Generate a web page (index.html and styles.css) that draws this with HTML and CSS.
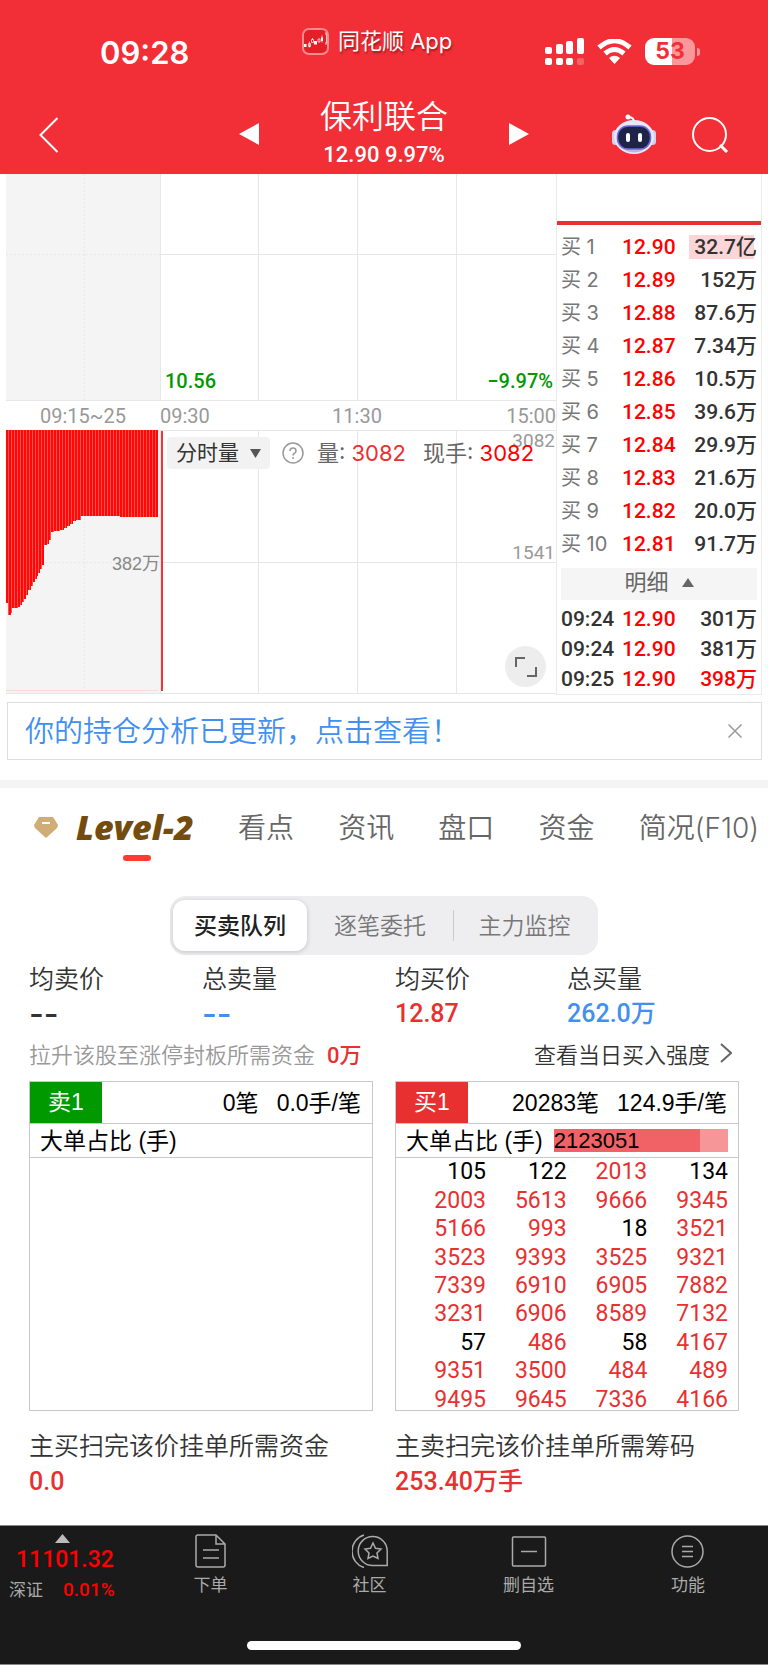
FILE: index.html
```
<!DOCTYPE html>
<html lang="zh-CN">
<head>
<meta charset="utf-8">
<meta name="viewport" content="width=device-width, initial-scale=1">
<title>保利联合</title>
<link rel="stylesheet" href="styles.css">
</head>
<body>
<header class="top">
  <div class="status">
    <span class="clock">09:28</span>
    <span class="app-label">
      <svg width="27" height="27" viewBox="0 0 27 27"><rect x="1" y="1" width="25" height="25" rx="6" fill="#e41f27" stroke="#f98a8e" stroke-width="2"/><path d="M2 16h2.500v3H2zM12 13h3v3.500h-3zM19 9.500h2v3.500h-2z" fill="#fff"/><path d="M6.500 15.500h2v3h-2zM9.500 11.500h2v3h-2zM16 11h2v3h-2zM23 6h1.500v9H23M7.500 13.500v6M10.500 10v2M20 7.500v7M24 4v2M24 15v2" fill="none" stroke="#fff" stroke-width=".7"/></svg>
      <span>同花顺 App</span>
    </span>
    <span class="indicators">
      <svg width="39" height="27" viewBox="0 0 39 27" fill="#fff"><rect y="9" width="7" height="7" rx="2"/><rect x="11" y="6" width="7" height="10" rx="2"/><rect x="21" y="3" width="7" height="13" rx="2"/><rect x="32" width="7" height="16" rx="2"/><rect y="20" width="7" height="7" rx="2"/><rect x="11" y="20" width="7" height="7" rx="2"/><rect x="21" y="20" width="7" height="7" rx="2"/><rect x="32" y="20" width="7" height="7" rx="2" opacity=".25"/></svg>
      <svg width="35" height="25" viewBox="0 0 35 25"><path d="M2 8.500Q17.500-5 33 8.500M8 14.500Q17.500 6.500 27 14.500" fill="none" stroke="#fff" stroke-width="5"/><path d="M12 19Q17.500 14.500 23 19L17.500 25z" fill="#fff"/></svg>
      <span class="battery"><span>53</span></span>
    </span>
  </div>
  <nav class="nav">
    <button class="icon-btn back" aria-label="返回"><svg width="20" height="36" viewBox="0 0 20 36"><path d="M18.500 1L1.500 18L18.500 35" fill="none" stroke="#fff" stroke-width="2"/></svg></button>
    <div class="switcher">
      <button class="icon-btn" aria-label="上一只"><svg width="20" height="22" viewBox="0 0 20 22"><path d="M20 0v22L0 11z" fill="#fff"/></svg></button>
      <div class="stock"><h1>保利联合</h1><p>12.90 9.97%</p></div>
      <button class="icon-btn" aria-label="下一只"><svg width="20" height="22" viewBox="0 0 20 22"><path d="M0 0v22L20 11z" fill="#fff"/></svg></button>
    </div>
    <div class="tools">
      <button class="icon-btn" aria-label="助手"><svg width="44" height="40" viewBox="0 0 44 40"><path d="M22 8Q22 3 16 3" fill="none" stroke="#fff" stroke-width="2"/><circle cx="16" cy="3" r="2.500" fill="#fff"/><rect x="0" y="16" width="7" height="15" rx="3.500" fill="#cfcff0"/><rect x="37" y="16" width="7" height="15" rx="3.500" fill="#cfcff0"/><ellipse cx="22" cy="23" rx="20" ry="17" fill="#e9e8f8"/><path d="M6 31Q22 46 38 31Q22 40 6 31" fill="#b9b6de"/><rect x="5.500" y="12" width="33" height="23" rx="10.500" fill="#1e2448" stroke="#7168d8" stroke-width="1.500"/><rect x="14" y="19" width="4" height="9" rx="2" fill="#fff"/><rect x="26" y="19" width="4" height="9" rx="2" fill="#fff"/></svg></button>
      <button class="icon-btn" aria-label="搜索"><svg width="37" height="36" viewBox="0 0 37 36"><circle cx="17.500" cy="17.500" r="16.500" fill="none" stroke="#fff" stroke-width="2"/><path d="M28 28l7 7" stroke="#fff" stroke-width="3"/></svg></button>
    </div>
  </nav>
</header>

<main>
<section class="market">
  <div class="charts">
    <div class="price">
      <svg class="plot" viewBox="0 0 550 227" preserveAspectRatio="none"><rect width="154" height="227" fill="#f4f4f4"/><path d="M78.500 0V227M0 80.500H154" stroke="#e9e9e9" stroke-dasharray="2 2"/><path d="M154.500 0V227M252.500 0V227M351.500 0V227M450.500 0V227M154 80.500H550M0 226.500H550" fill="none" stroke="#e7e7e7"/></svg>
      <span class="low">10.56</span><span class="low">−9.97%</span>
    </div>
    <div class="axis"><span>09:15~25</span><span>09:30</span><span>11:30</span><span>15:00</span></div>
    <div class="volume">
      <svg class="plot" viewBox="0 0 550 264" preserveAspectRatio="none"><defs><pattern id="bars" width="3" height="8" patternUnits="userSpaceOnUse"><rect width="3" height="8" fill="#ff5050"/><rect width="2" height="8" fill="#fe0808"/></pattern></defs><rect width="154" height="264" fill="#f4f4f4"/><path d="M78.500 0V264M0 132.500H154" stroke="#e9e9e9" stroke-dasharray="2 2"/><path d="M154 .5H550M154.500 0V264M252.500 0V264M351.500 0V264M450.500 0V264M154 132.500H550M0 263.500H550" fill="none" stroke="#e7e7e7"/><path d="M0 260.500H152" stroke="#fbd9d9"/><path d="M0 0V173H2V185H5V183H6V178H12V177H14V175H16V172H18V169H20V165H22V160H25V156H27V152H29V149H31V146H32V143H34V139H36V135H38V115H41V114H43V110H45V102H48V101H54V100H58V98H61V96H64V94H67V91H70V90H75V86H114V87H152V0Z" fill="url(#bars)"/><path d="M156 1V261" stroke="#f03535" stroke-width="2"/></svg>
      <span class="auction-mid">382万</span>
      <div class="legend">
        <button class="metric">分时量<svg width="11" height="9" viewBox="0 0 11 9"><path d="M0 0h11L5.500 9z" fill="#555"/></svg></button>
        <svg class="help" width="22" height="22" viewBox="0 0 22 22" fill="none" stroke="#999" stroke-width="1.500"><circle cx="11" cy="11" r="10"/><path d="M8 9Q8 6 11 6T14 9Q14 10.500 12.500 11.200T11 13.500M11 15v2"/></svg>
        <span>量: <b>3082</b></span><span>现手: <b class="hot">3082</b></span>
      </div>
      <span class="scale max">3082</span><span class="scale mid">1541</span>
      <button class="expand" aria-label="全屏"><svg width="22" height="22" viewBox="0 0 22 22" fill="none" stroke="#666" stroke-width="2"><path d="M1 11V2H10M21 11V20H12"/></svg></button>
    </div>
  </div>
  <aside class="book">
    <table class="quotes">
      <tr><th>买 1</th><td class="up">12.90</td><td><span class="heavy">32.7亿</span></td></tr>
      <tr><th>买 2</th><td class="up">12.89</td><td>152万</td></tr>
      <tr><th>买 3</th><td class="up">12.88</td><td>87.6万</td></tr>
      <tr><th>买 4</th><td class="up">12.87</td><td>7.34万</td></tr>
      <tr><th>买 5</th><td class="up">12.86</td><td>10.5万</td></tr>
      <tr><th>买 6</th><td class="up">12.85</td><td>39.6万</td></tr>
      <tr><th>买 7</th><td class="up">12.84</td><td>29.9万</td></tr>
      <tr><th>买 8</th><td class="up">12.83</td><td>21.6万</td></tr>
      <tr><th>买 9</th><td class="up">12.82</td><td>20.0万</td></tr>
      <tr><th>买 10</th><td class="up">12.81</td><td>91.7万</td></tr>
    </table>
    <button class="detail">明细<svg width="12" height="9" viewBox="0 0 12 9"><path d="M6 0l6 9H0z" fill="#666"/></svg></button>
    <table class="quotes trades">
      <tr><td>09:24</td><td class="up">12.90</td><td>301万</td></tr>
      <tr><td>09:24</td><td class="up">12.90</td><td>381万</td></tr>
      <tr><td>09:25</td><td class="up">12.90</td><td class="up">398万</td></tr>
    </table>
  </aside>
</section>

<div class="notice"><a href="#">你的持仓分析已更新，点击查看！</a><button class="icon-btn" aria-label="关闭"><svg width="14" height="14" viewBox="0 0 14 14"><path d="M.5.5l13 13M13.500.5l-13 13" stroke="#999" stroke-width="1.500"/></svg></button></div>

<nav class="tabs">
  <a class="level" href="#"><svg width="24" height="21" viewBox="0 0 24 21"><path d="M5 0H19L24 8Q24 10 22 12L12 21L2 12Q0 10 0 8Z" fill="#d0ac77"/><path d="M8 6h8" stroke="#fff" stroke-width="2"/></svg><span>Level-2</span></a>
  <a href="#">看点</a><a href="#">资讯</a><a href="#">盘口</a><a href="#">资金</a><a href="#">简况(F10)</a>
</nav>

<div class="segment"><button class="on">买卖队列</button><button>逐笔委托</button><button>主力监控</button></div>

<section class="depth">
  <dl class="stats">
    <div><dt>均卖价</dt><dd class="dash">--</dd></div>
    <div><dt>总卖量</dt><dd class="dash blue">--</dd></div>
    <div><dt>均买价</dt><dd class="red">12.87</dd></div>
    <div><dt>总买量</dt><dd class="blue">262.0万</dd></div>
  </dl>
  <div class="hint"><span>拉升该股至涨停封板所需资金</span><b>0万</b><a href="#">查看当日买入强度<svg width="12" height="20" viewBox="0 0 12 20"><path d="M1 1l10 9L1 19" fill="none" stroke="#666" stroke-width="2"/></svg></a></div>
  <div class="queues">
    <div class="side">
      <div class="queue">
        <div class="q-head"><span class="badge sell">卖1</span><span>0笔</span><span>0.0手/笔</span></div>
        <div class="q-ratio"><span>大单占比 (手)</span></div>
      </div>
      <p class="caption">主买扫完该价挂单所需资金</p><p class="amount">0.0</p>
    </div>
    <div class="side">
      <div class="queue">
        <div class="q-head"><span class="badge buy">买1</span><span>20283笔</span><span>124.9手/笔</span></div>
        <div class="q-ratio"><span>大单占比 (手)</span><span class="bar">2123051</span></div>
        <table class="orders">
          <tr><td class="k">105</td><td class="k">122</td><td>2013</td><td class="k">134</td></tr>
          <tr><td>2003</td><td>5613</td><td>9666</td><td>9345</td></tr>
          <tr><td>5166</td><td>993</td><td class="k">18</td><td>3521</td></tr>
          <tr><td>3523</td><td>9393</td><td>3525</td><td>9321</td></tr>
          <tr><td>7339</td><td>6910</td><td>6905</td><td>7882</td></tr>
          <tr><td>3231</td><td>6906</td><td>8589</td><td>7132</td></tr>
          <tr><td class="k">57</td><td>486</td><td class="k">58</td><td>4167</td></tr>
          <tr><td>9351</td><td>3500</td><td>484</td><td>489</td></tr>
          <tr><td>9495</td><td>9645</td><td>7336</td><td>4166</td></tr>
        </table>
      </div>
      <p class="caption">主卖扫完该价挂单所需筹码</p><p class="amount">253.40万手</p>
    </div>
  </div>
</section>
</main>

<footer class="bottom">
  <div class="actions">
    <button class="index"><svg width="15" height="9" viewBox="0 0 15 9"><path d="M7.500 0L15 9H0z" fill="#bbb"/></svg><span class="points">11101.32</span><span class="change">深证<b>0.01%</b></span></button>
    <button><svg width="36" height="34" viewBox="0 0 36 34" fill="none" stroke="#aaa" stroke-width="1.500"><path d="M3 3Q3 1 5 1H23L32 10V31Q32 33 30 33H5Q3 33 3 31ZM23 1V10H32M10 16H26M10 24H26"/></svg>下单</button>
    <button><svg width="36" height="34" viewBox="0 0 36 34" fill="none" stroke="#aaa" stroke-width="1.500"><path d="M12 1A17 17 0 0 0 12 33.500M21 31.500A14.500 14.500 0 1 1 35.200 17V31.500ZM21 9L23.500 14.200L29 15L25 19L26 24.500L21 22L16 24.500L17 19L13 15L18.500 14.200Z"/></svg>社区</button>
    <button><svg width="36" height="34" viewBox="0 0 36 34" fill="none" stroke="#aaa" stroke-width="1.500"><rect x="1.500" y="3" width="33" height="29" rx="1"/><path d="M10 17.500H26"/></svg>删自选</button>
    <button><svg width="36" height="34" viewBox="0 0 36 34" fill="none" stroke="#aaa" stroke-width="1.500"><circle cx="17.500" cy="17.500" r="15.500"/><path d="M12 12.500H23M12 17.500H23M12 22.500H23"/></svg>功能</button>
  </div>
  <div class="home"></div>
</footer>
</body>
</html>
```
FILE: styles.css
```
* { box-sizing: border-box; }
body {
  margin: 0;
  background: #fff;
  color: #333;
  font-family: Roboto, "Noto Sans CJK SC", sans-serif;
}
h1, p, dl, dd { margin: 0; }
a { color: inherit; text-decoration: none; }
button {
  margin: 0;
  padding: 0;
  border: 0;
  background: none;
  color: inherit;
  font: inherit;
}
svg { flex: none; display: block; }
table { border-collapse: collapse; width: 100%; }
td, th { padding: 0; }

/* Header */
.top { height: 174px; background: #f22f37; color: #fff; }
.status {
  display: grid;
  grid-template-columns: 302fr 243fr 223fr;
  height: 96px;
}
.clock {
  padding: 33px 0 0 100px;
  font: 600 31px/40px Inter, sans-serif;
}
.app-label {
  display: flex;
  align-items: center;
  gap: 9px;
  height: 82px;
  font: 22px/32px Inter, "Noto Sans CJK SC", sans-serif;
  text-shadow: 1px 2px 2px rgba(90, 0, 0, .5);
  white-space: nowrap;
}
.indicators { display: flex; align-items: center; gap: 13px; height: 103px; }
.battery {
  position: relative;
  width: 50px;
  height: 27px;
  border-radius: 9px;
  background: linear-gradient(90deg, #fff 54%, #f9979b 54%);
  color: #f22f37;
  font: 700 23px/27px Inter, sans-serif;
  text-align: center;
}
.battery::after {
  content: "";
  position: absolute;
  left: 52px;
  top: 10px;
  width: 3px;
  height: 8px;
  border-radius: 0 3px 3px 0;
  background: #f9979b;
}
.nav { display: grid; grid-template-columns: 239fr 290fr 239fr; }
.icon-btn { display: flex; }
.back { padding: 21px 0 0 39px; }
.switcher { display: flex; justify-content: space-between; align-items: flex-start; }
.switcher .icon-btn { padding-top: 27px; }
.stock { text-align: center; }
.stock h1 { font-size: 32px; font-weight: 350; line-height: 42px; }
.stock p { font-size: 22px; font-weight: 500; line-height: 34px; }
.tools {
  display: flex;
  justify-content: space-between;
  align-items: flex-start;
  padding: 18px 39px 0 83px;
}
.tools .icon-btn:last-child { padding-top: 3px; }

/* Charts */
.market {
  display: grid;
  grid-template-columns: 550fr 206fr;
  padding: 0 6px;
}
.plot { position: absolute; inset: 0; z-index: -1; width: 100%; height: 100%; }
.price {
  position: relative;
  z-index: 0;
  display: flex;
  justify-content: space-between;
  align-items: flex-end;
  height: 227px;
  padding: 0 3px 6px 159px;
}
.low { color: #090; font-size: 20px; font-weight: 500; line-height: 28px; }
.axis {
  display: grid;
  grid-template-columns: 154fr 148fr 98fr 150fr;
  height: 29px;
  color: #999;
  font-size: 20px;
  line-height: 30px;
}
.axis span:first-child { text-align: center; }
.axis span:nth-child(3) { text-align: center; }
.axis span:last-child { text-align: right; }
.volume { position: relative; z-index: 0; height: 264px; }
.auction-mid {
  position: absolute;
  right: 396px;
  top: 122px;
  color: #888;
  font: 18px/24px "Liberation Sans", "Noto Sans CJK SC", sans-serif;
}
.legend {
  display: flex;
  align-items: center;
  padding: 7px 0 0 161px;
  color: #666;
  font: 22px/32px Inter, "Noto Sans CJK SC", sans-serif;
  white-space: nowrap;
}
.legend b { color: #e93030; font-weight: 400; }
.legend .hot { color: #f00; }
.legend span { margin-right: 17px; }
.metric {
  display: flex;
  align-items: center;
  gap: 11px;
  height: 32px;
  padding: 0 9px;
  border-radius: 4px;
  background: #f2f2f2;
  color: #333;
  font-size: 21px;
}
.help { margin: 0 13px 0 12px; }
.scale { position: absolute; right: 1px; color: #999; font-size: 19px; line-height: 24px; }
.max { top: -1px; z-index: -1; }
.mid { top: 111px; }
.expand {
  position: absolute;
  right: 10px;
  bottom: 7px;
  display: grid;
  place-items: center;
  width: 41px;
  height: 41px;
  border-radius: 50%;
  background: #ededed;
}

/* Order book */
.book {
  padding: 47px 4px 0;
  border: solid #ebebeb;
  border-width: 0 1px 1px;
  background: linear-gradient(#e93030, #e93030) 0 47px / 100% 4px no-repeat;
}
.quotes { margin-top: 9px; color: #333; font-size: 21px; font-weight: 500; }
.quotes tr { height: 33px; }
.quotes td, .quotes th { line-height: 30px; white-space: nowrap; }
.quotes th {
  width: 61px;
  color: #777;
  font: 20px/30px Inter, "Noto Sans CJK SC", sans-serif;
  text-align: left;
}
.quotes td:last-child { text-align: right; }
.quotes .up { color: #f00; }
.heavy {
  display: inline-block;
  padding-left: 5px;
  background: linear-gradient(90deg, #fbd5d7 95%, transparent 95%);
  line-height: 24px;
}
.detail {
  display: flex;
  justify-content: center;
  align-items: center;
  gap: 13px;
  width: 100%;
  height: 32px;
  margin-top: 8px;
  padding-bottom: 3px;
  background: #f5f5f5;
  color: #666;
  font-size: 22px;
  line-height: 29px;
}
.trades { margin-top: 4px; }
.trades tr { height: 30px; }
.trades td:first-child { width: 61px; }

.notice {
  display: flex;
  align-items: center;
  justify-content: space-between;
  height: 58px;
  margin: 7px 6px 0 7px;
  padding: 0 19px 4px 17px;
  border: 1px solid #ddd;
  color: #418ff0;
  font-size: 29px;
  font-weight: 350;
}
.notice .icon-btn { padding-top: 3px; }

/* Tabs */
.tabs {
  display: flex;
  justify-content: space-between;
  margin-top: 20px;
  padding: 18px 9px 0 34px;
  border-top: 8px solid #f4f4f4;
  color: #666;
  font: 350 28px/44px Inter, "Noto Sans CJK SC", sans-serif;
  white-space: nowrap;
}
.level { display: flex; align-items: center; gap: 18px; }
.level span {
  position: relative;
  height: 56px;
  color: #754c10;
  font: italic 800 34px/42px "Open Sans", sans-serif;
}
.level svg { margin-bottom: 14px; }
.level span::after {
  content: "";
  position: absolute;
  left: 47px;
  bottom: 1px;
  width: 28px;
  height: 6px;
  border-radius: 3px;
  background: #ff3a30;
}
.segment {
  display: grid;
  grid-template-columns: 134fr 147fr 141fr;
  width: 428px;
  height: 59px;
  margin: 34px auto 0 170px;
  padding: 4px 3px;
  border-radius: 16px;
  background: #eeeef0;
  color: #777;
  font-size: 23px;
  font-weight: 350;
}
.segment button { padding-bottom: 4px; }
.segment .on {
  border-radius: 12px;
  background: #fff;
  box-shadow: 0 1px 5px rgba(0, 0, 0, .18);
  color: #222;
  font-weight: 500;
}
.segment .on + button { border-right: 1px solid #ccc; border-image: linear-gradient(transparent 20%, #ccc 20% 80%, transparent 80%) 1; }

/* Depth */
.depth { padding: 7px 29px 0; }
.stats { display: grid; grid-template-columns: 173fr 193fr 172fr 172fr; }
.stats dt { font-size: 25px; font-weight: 350; line-height: 35px; }
.stats dd { font-size: 25px; font-weight: 500; line-height: 34px; }
.stats .dash { font-family: Inter, sans-serif; font-size: 32px; }
.red { color: #e93030; }
.blue { color: #418ff0; }
.hint {
  display: flex;
  align-items: center;
  height: 49px;
  padding-bottom: 6px;
  color: #999;
  font-size: 22px;
  font-weight: 350;
  white-space: nowrap;
}
.hint b { margin-left: 12px; color: #e93030; font-weight: 500; }
.hint a { display: flex; align-items: center; gap: 10px; margin-left: auto; padding-right: 7px; color: #333; }
.queues { display: grid; grid-template-columns: 1fr 1fr; gap: 22px; margin-top: 1px; }
.queue {
  height: 330px;
  border: 1px solid #c8c8c8;
  color: #000;
  font: 22px/30px "Liberation Sans", "Noto Sans CJK SC", sans-serif;
}
.q-head {
  display: flex;
  align-items: center;
  gap: 18px;
  height: 42px;
  padding-right: 11px;
  border-bottom: 1px solid #c8c8c8;
  font-size: 23px;
}
.badge { width: 72px; height: 41px; margin-right: auto; color: #fff; line-height: 41px; text-align: center; }
.sell { background: #090; }
.buy { background: #e93030; }
.q-ratio {
  display: flex;
  align-items: center;
  gap: 11px;
  height: 34px;
  padding: 0 10px;
  border-bottom: 1px solid #c8c8c8;
  font-size: 23px;
  white-space: nowrap;
}
.bar { flex: 1; font-size: 22px; line-height: 23px; background: linear-gradient(90deg, #f06266 84%, #f69698 84%); }
.orders { height: 256px; table-layout: fixed; color: #e93030; font-family: Roboto, sans-serif; font-size: 23px; line-height: 28px; }
.orders td { padding-right: 10px; text-align: right; }
.orders td:first-child { width: 100px; }
.orders .k { color: #000; }
.caption { margin-top: 18px; font-size: 25px; font-weight: 350; line-height: 36px; white-space: nowrap; }
.amount { color: #e93030; font-size: 25px; font-weight: 500; line-height: 34px; }

/* Bottom bar */
.bottom {
  margin-top: 26px;
  padding-bottom: 14px;
  border-top: 1px solid #888;
  border-bottom: 1px solid #888;
  background: #1a1a1a;
  color: #aaa;
}
.actions { display: grid; grid-template-columns: 131fr 159fr 159fr 159fr 160fr; height: 115px; }
.actions button {
  display: flex;
  flex-direction: column;
  align-items: center;
  gap: 4px;
  padding-top: 8px;
  font-size: 17px;
  line-height: 26px;
}
.actions .index { align-items: flex-start; gap: 0; padding-left: 9px; }
.index svg { margin-left: 46px; }
.points { padding-left: 7px; color: #f00; font-size: 23px; font-weight: 500; line-height: 34px; }
.change b { margin-left: 20px; color: #f00; font-size: 19px; font-weight: 500; }
.home { width: 274px; height: 9px; margin: 0 auto; border-radius: 5px; background: #fff; }
```
